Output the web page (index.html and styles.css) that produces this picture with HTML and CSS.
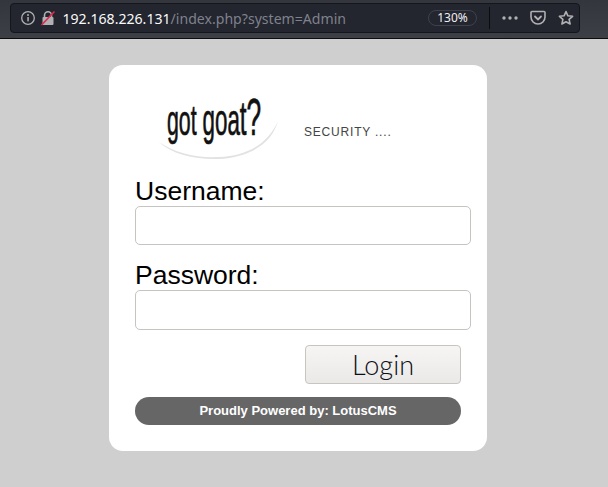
FILE: index.html
```html
<!DOCTYPE html>
<html>
<head>
<meta charset="UTF-8">
<link rel="stylesheet" href="styles.css">
<title>LotusCMS Login</title>
</head>
<body>

<div class="toolbar">
  <div class="urlbar">
    <svg class="icon info" width="16" height="16" viewBox="0 0 16 16">
      <circle cx="8" cy="8" r="6.3" fill="none" stroke="#b1b1b3" stroke-width="1.3"/>
      <rect x="7.3" y="7" width="1.5" height="4.4" fill="#b1b1b3"/>
      <circle cx="8" cy="5" r="1" fill="#b1b1b3"/>
    </svg>
    <svg class="icon lock" width="16" height="16" viewBox="0 0 16 16">
      <path d="M4.5 7V5.2a3.5 3.5 0 0 1 7 0V7" fill="none" stroke="#b1b1b3" stroke-width="1.6"/>
      <rect x="2.5" y="7" width="11" height="8" rx="1" fill="#b1b1b3"/>
      <path d="M1.5 15 14.5 1.5" stroke="#e22850" stroke-width="1.7"/>
    </svg>
    <div class="url"><span class="host">192.168.226.131</span>/index.php?system=Admin</div>
    <div class="zoom">130%</div>
    <div class="sep"></div>
    <svg class="icon dots" width="16" height="16" viewBox="0 0 16 16">
      <circle cx="2" cy="8" r="1.7" fill="#b1b1b3"/>
      <circle cx="8" cy="8" r="1.7" fill="#b1b1b3"/>
      <circle cx="14" cy="8" r="1.7" fill="#b1b1b3"/>
    </svg>
    <svg class="icon pocket" width="16" height="16" viewBox="0 0 16 16">
      <path d="M2 1.5h12a1 1 0 0 1 1 1V7a7 7 0 0 1-14 0V2.5a1 1 0 0 1 1-1z" fill="none" stroke="#b1b1b3" stroke-width="1.6"/>
      <path d="M5 6.5 8 9.5 11 6.5" fill="none" stroke="#b1b1b3" stroke-width="1.8" stroke-linecap="round"/>
    </svg>
    <svg class="icon star" width="16" height="16" viewBox="0 0 16 16">
      <path d="M8 1.6 9.9 5.8 14.6 6.3 11.1 9.4 12.1 14 8 11.7 3.9 14 4.9 9.4 1.4 6.3 6.1 5.8z" fill="none" stroke="#b1b1b3" stroke-width="1.6" stroke-linejoin="round"/>
    </svg>
  </div>
</div>

<div class="card">
  <div class="brand">
    <svg class="logo" width="150" height="100" viewBox="0 0 150 100">
      <path d="M24 69C38 82 62 87 84 86 116 84 137 70 143 48 134 69 114 83 84 84 60 85 40 80 24 69z" fill="#e2e2e2"/>
      <text class="logo-text" transform="translate(32 62) scale(0.508 1)">got <tspan class="logo-b">goa</tspan><tspan class="logo-c">t</tspan><tspan class="logo-d">?</tspan></text>
    </svg>
    <div class="tagline">SECURITY ....</div>
  </div>
  <form class="login">
    <label class="label" for="user">Username:</label>
    <input class="field" id="user" type="text">
    <label class="label second" for="pass">Password:</label>
    <input class="field tall" id="pass" type="password">
    <div class="actions"><button class="submit" type="button">Login</button></div>
  </form>
  <div class="powered">Proudly Powered by: LotusCMS</div>
</div>

</body>
</html>
```

FILE: styles.css
```css
html, body { margin: 0; height: 487px; overflow: hidden; }
body { background-color: #cfcfcf; font-family: "Liberation Sans", sans-serif; }

.toolbar { height: 35px; padding: 3px 28px 0 10px;
           background: linear-gradient(#34363d, #3d3f46);
           border-bottom: 1px solid #0c0c0d; }
.urlbar { height: 30px; background-color: #23252f;
          border: 1px solid #15161c; border-radius: 4px; box-sizing: border-box;
          display: flex; align-items: center; padding-left: 9px; }
.icon { flex: none; }
.lock { margin-left: 4px; }
.url { margin-left: 6.5px; flex: 1; font-family: "Noto Sans", sans-serif;
       font-size: 14.1px; color: #7f828c; white-space: nowrap; }
.host { color: #f9f9fa; }
.zoom { width: 49px; height: 16px; box-sizing: border-box;
        border: 1px solid #3f414b; border-radius: 8px;
        font-family: "Noto Sans", sans-serif; font-size: 12px; line-height: 14px;
        color: #f0f0f2; text-align: center; }
.sep { width: 1px; height: 22px; background-color: #0c0c0d; margin-left: 12px; }
.dots { margin-left: 12px; }
.pocket { margin-left: 12px; }
.star { margin-left: 12px; margin-right: 5px; }

.card { width: 378px; height: 386px; margin: 26px auto 0 109px; box-sizing: border-box;
        padding: 0 16px 0 26px; background-color: #ffffff; border-radius: 14px; }
.brand { display: flex; height: 111px; }
.logo { flex: none; margin: 8px 0 0 0; }
.tagline { margin: 60px 0 0 19px; font-size: 12px; letter-spacing: 0.8px; color: #444444;
           white-space: nowrap; }
.logo-text { font-family: "Liberation Sans", sans-serif; font-size: 42px; fill: #111111;
             stroke: #111111; stroke-width: 0.7px; }
.logo-b { font-size: 44px; }
.logo-c { font-size: 48px; }
.logo-d { font-size: 52px; }

.login { margin: 0; }
.label { display: block; font-size: 26.5px; line-height: 30px; color: #000000; }
.second { margin-top: 15px; }
.field { display: block; width: 336px; height: 39px; margin: 0; box-sizing: border-box;
         border: 1px solid #c6c4c0; border-radius: 5px; background-color: #ffffff; }
.tall { height: 40px; }
.actions { width: 326px; margin-top: 15px; display: flex; justify-content: flex-end; }
.submit { width: 156px; height: 39px; padding: 0; border: 1px solid #c8c5c0; border-radius: 4px;
          background: linear-gradient(#f6f5f4, #ebe9e7);
          font-family: "Lato", sans-serif; font-size: 27px; font-weight: 300; color: #0c0f14; }
.powered { width: 326px; height: 28px; margin-top: 13px; border-radius: 14px;
           background-color: #666666; color: #ffffff; font-size: 13px; font-weight: bold;
           line-height: 27px; text-align: center; }
```
